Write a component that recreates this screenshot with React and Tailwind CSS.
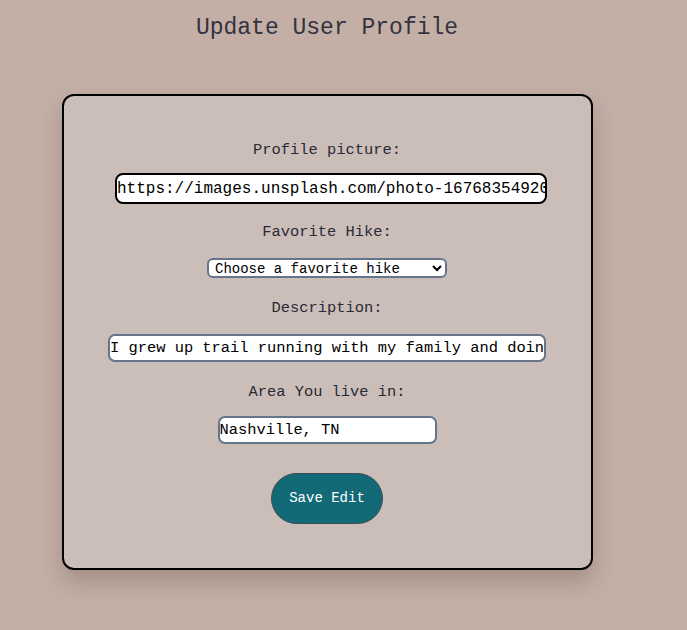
export default function App() {
  const mono = { fontFamily: '"Liberation Mono", "DejaVu Sans Mono", monospace' };

  return (
    <div className="min-h-[630px] w-full bg-[#c3afa6] text-[#2a2936]" style={mono}>
      <div className="w-[654px] pt-[11px] flex flex-col items-center">
        <h1 className="text-[23px] leading-[34px] text-[#33323f]">Update User Profile</h1>

        <form
          onSubmit={e => e.preventDefault()}
          className="mt-[49px] w-[531px] bg-[#cbbeb9] border-2 border-black rounded-[12px] shadow-[0_12px_22px_rgba(60,30,20,0.22)] flex flex-col items-center pt-[42px] pb-[44px]"
        >
          <label className="text-[15.4px] leading-[24px]">Profile picture:</label>
          <input
            defaultValue="https://images.unsplash.com/photo-1676835492000-4b3c2f5a"
            className="mt-[11px] ml-[8px] w-[432px] h-[31px] bg-white border-2 border-black rounded-[8px] px-0 text-[16px] text-black outline-none"
            style={mono}
          />

          <label className="mt-[16px] text-[15.4px] leading-[24px]">Favorite Hike:</label>
          <select
            defaultValue=""
            className="mt-[14px] w-[240px] h-[20px] bg-white border-2 border-[#64748b] rounded-[6px] text-[14px] leading-none text-black pl-[2px] outline-none"
            style={mono}
          >
            <option value="">Choose a favorite hike</option>
          </select>

          <label className="mt-[18px] text-[15.4px] leading-[24px]">Description:</label>
          <input
            defaultValue="I grew up trail running with my family and doing it every weekend"
            className="mt-[14px] w-[438px] h-[28px] bg-white border-2 border-[#64748b] rounded-[7px] px-0 text-[15.4px] text-black outline-none"
            style={mono}
          />

          <label className="mt-[18px] text-[15.4px] leading-[24px]">Area You live in:</label>
          <input
            defaultValue="Nashville, TN"
            className="mt-[12px] w-[219px] h-[28px] bg-white border-2 border-[#64748b] rounded-[7px] px-0 text-[15.4px] text-black outline-none"
            style={mono}
          />

          <button
            type="submit"
            className="mt-[29px] w-[112px] h-[51px] rounded-full bg-[#116a76] border border-[#3f4a55] text-white text-[14px]"
            style={mono}
          >
            Save Edit
          </button>
        </form>
      </div>
    </div>
  );
}
